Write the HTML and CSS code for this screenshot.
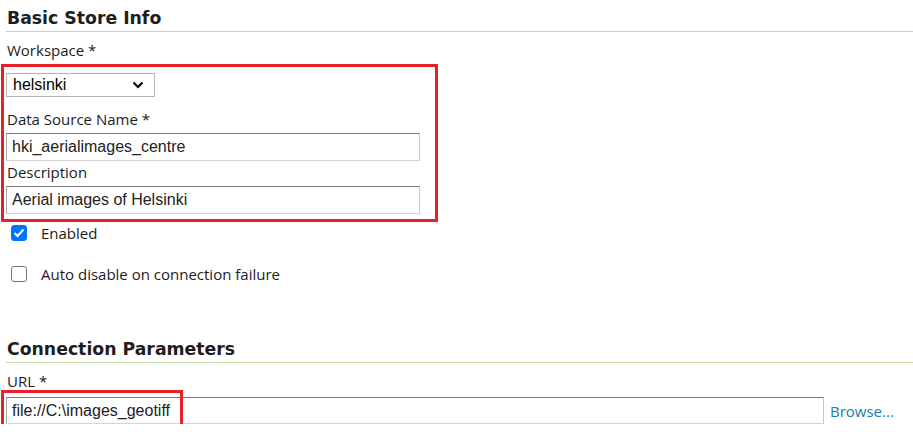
FILE: index.html
```html
<!DOCTYPE html>
<html>
<head>
<meta charset="utf-8">
<link rel="stylesheet" href="styles.css">
</head>
<body>
<div class="page">
  <h2 class="section-title">Basic Store Info</h2>
  <label class="field-label lbl-first">Workspace *</label>
  <div class="highlight-box">
    <div class="select-box">
      <span>helsinki</span>
      <svg class="chev" width="12" height="8" viewBox="0 0 12 8"><path d="M1.5 1.5 L6 6 L10.5 1.5" fill="none" stroke="#000" stroke-width="2.2"/></svg>
    </div>
    <label class="field-label lbl-after-select">Data Source Name *</label>
    <div class="text-input w-short">hki_aerialimages_centre</div>
    <label class="field-label lbl-after-input">Description</label>
    <div class="text-input w-short">Aerial images of Helsinki</div>
  </div>
  <div class="check-row first-check">
    <span class="checkbox checked">
      <svg width="12" height="10" viewBox="0 0 12 10"><path d="M1.5 5 L4.6 8 L10.5 1.6" fill="none" stroke="#fff" stroke-width="2.2"/></svg>
    </span>
    <span class="check-text">Enabled</span>
  </div>
  <div class="check-row second-check">
    <span class="checkbox"></span>
    <span class="check-text">Auto disable on connection failure</span>
  </div>
  <h2 class="section-title second-title">Connection Parameters</h2>
  <label class="field-label lbl-first">URL *</label>
  <div class="url-row">
    <div class="text-input w-long">file://C:\images_geotiff</div>
    <a class="browse">Browse...</a>
    <div class="url-highlight"></div>
  </div>
</div>
</body>
</html>
```
FILE: styles.css
```css
html, body {
  margin: 0;
  padding: 0;
  background: #fff;
}
.page {
  display: flex;
  flex-direction: column;
  align-items: flex-start;
  padding-left: 6px;
  font-family: "Open Sans", "Noto Sans", sans-serif;
  color: #1c1c1c;
}
.section-title {
  align-self: stretch;
  margin: 0;
  padding: 8px 0 3px 1px;
  font-family: "DejaVu Sans", Verdana, sans-serif;
  font-weight: bold;
  font-size: 17.3px;
  line-height: 20px;
  color: #1e1e1e;
  border-bottom: 1px solid #c6dca6;
}
.second-title {
  margin-top: 47px;
}
.field-label {
  display: block;
  font-size: 15px;
  line-height: 20px;
  color: #1c1c1c;
  padding-left: 1px;
}
.lbl-first {
  margin-top: 8px;
}
.lbl-after-select {
  margin-top: 12px;
}
.lbl-after-input {
  margin-top: 1px;
}
.highlight-box {
  margin-left: -5px;
  margin-top: 4px;
  width: 429px;
  padding: 6px 0 5px 2px;
  border: 3px solid #e8202a;
  display: flex;
  flex-direction: column;
  align-items: flex-start;
}
.select-box {
  box-sizing: border-box;
  width: 149px;
  height: 24px;
  border: 1px solid #b4b4b4;
  display: flex;
  align-items: center;
  justify-content: space-between;
  padding: 0 10px 0 6px;
  font-family: "Liberation Sans", Arial, sans-serif;
  font-size: 16px;
  color: #000;
}
.chev {
  display: block;
}
.text-input {
  box-sizing: border-box;
  height: 28px;
  margin-top: 4px;
  border: 1px solid;
  border-color: #7a7a7a #c6c6c6 #d4d4d4 #a6a6a6;
  padding: 0 5px;
  display: flex;
  align-items: center;
  font-family: "Liberation Sans", Arial, sans-serif;
  font-size: 16px;
  color: #222;
  background: #fff;
}
.w-short {
  width: 414px;
}
.w-long {
  width: 818px;
  height: 27px;
}
.check-row {
  display: flex;
  align-items: center;
  gap: 14px;
  padding-left: 5px;
  font-size: 15px;
  line-height: 20px;
}
.first-check {
  margin-top: 1px;
}
.second-check {
  margin-top: 21px;
}
.checkbox {
  box-sizing: border-box;
  width: 16px;
  height: 16px;
  border: 1.5px solid #767676;
  border-radius: 3px;
  display: flex;
  align-items: center;
  justify-content: center;
  background: #fff;
}
.checkbox.checked {
  background: #0075ff;
  border-color: #0075ff;
}
.check-text {
  color: #1c1c1c;
}
.url-row {
  position: relative;
  display: flex;
  align-items: center;
  gap: 6px;
  margin-top: 6px;
}
.url-row .text-input {
  margin-top: 0;
}
.browse {
  font-size: 15px;
  color: #1a7db5;
}
.url-highlight {
  position: absolute;
  left: -5px;
  top: -7px;
  width: 176px;
  height: 37px;
  border: 3px solid #e8202a;
}
```
